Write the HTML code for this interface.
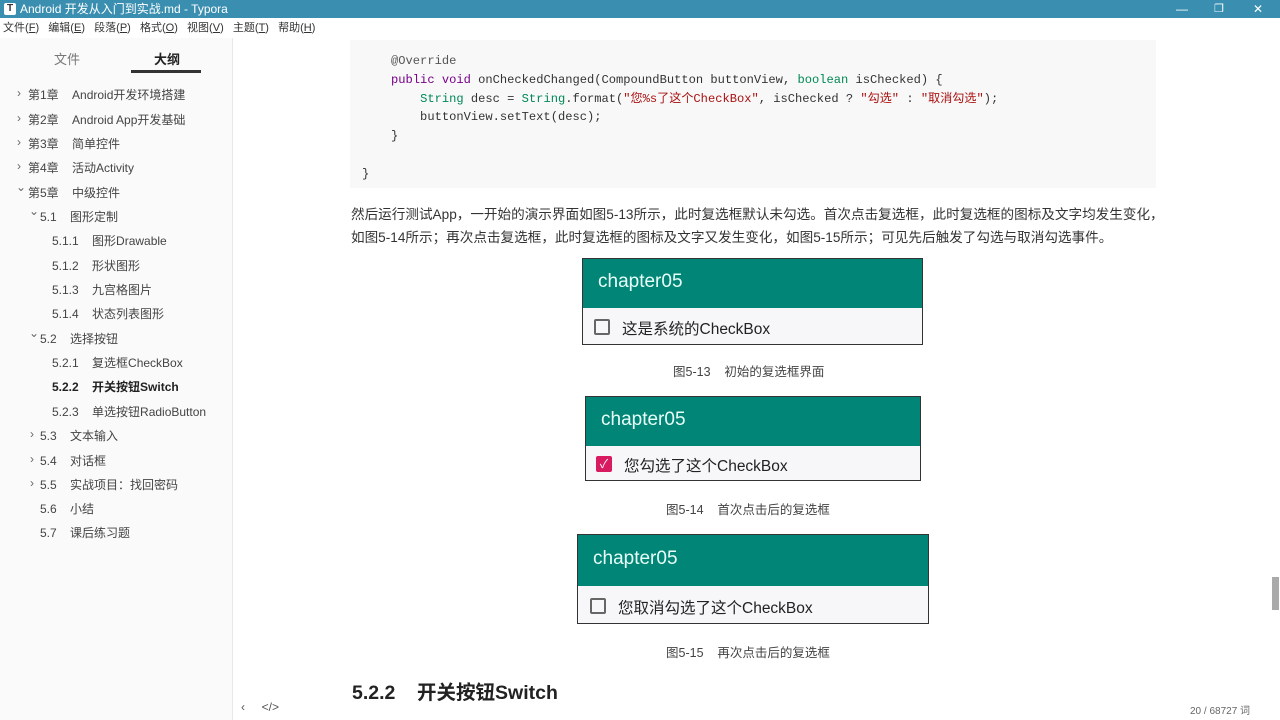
<!DOCTYPE html>
<html><head><meta charset="utf-8"><style>
*{margin:0;padding:0;box-sizing:border-box}
body{width:1280px;height:720px;overflow:hidden;background:#fff;font-family:"Liberation Sans","Noto Sans CJK SC",sans-serif;color:#333;position:relative}
.abs{position:absolute;white-space:nowrap}
#title{left:0;top:0;width:1280px;height:18px;background:#3a8fb0;color:#fff;font-size:12px;line-height:18px}
#menu{left:0;top:18px;width:1280px;height:20px;font-size:11px;line-height:20px;color:#333}
#side{left:0;top:38px;width:233px;height:682px;background:#fafafa;border-right:1px solid #e8e8e8}
.si{font-size:12px;color:#444;position:absolute;white-space:nowrap}
.ar{position:absolute;font-size:12px;color:#666}
pre{font-family:"Liberation Mono","Noto Sans CJK SC",monospace;font-size:12.1px;color:#333;white-space:pre !important}
.code{left:350px;top:40px;width:806px;height:148px;background:#f8f8f8}
.kw{color:#770088}.ty{color:#008855}.st{color:#aa1111}.at{color:#555}
.p{font-size:13.6px;color:#333}
.fig{position:absolute;border:1.5px solid #333;background:#f7f7f9}
.fig .h{background:#008577;color:#e8fff8;font-size:19px;padding-left:15px;font-family:"Liberation Sans",sans-serif}
.fig .b{font-size:15.5px;color:#222;position:relative}
.cb{position:absolute;width:16px;height:16px;border:2px solid #666;border-radius:2px}
.cap{font-size:12.5px;color:#444;position:absolute;white-space:nowrap}
</style></head><body>
<div id="title" class="abs"><span style="display:inline-block;width:12px;height:12px;background:#fff;color:#333;font-size:10px;line-height:12px;text-align:center;margin:3px 4px 0 4px;vertical-align:top;font-weight:bold;border-radius:2px">T</span>Android 开发从入门到实战.md - Typora
<span style="position:absolute;left:1176px;top:0">—</span><span style="position:absolute;left:1214px;top:0;font-size:11px">❐</span><span style="position:absolute;left:1253px;top:0">✕</span></div>
<div id="menu" class="abs">&nbsp;文件(<u>F</u>)&nbsp;&nbsp; 编辑(<u>E</u>)&nbsp;&nbsp; 段落(<u>P</u>)&nbsp;&nbsp; 格式(<u>O</u>)&nbsp;&nbsp; 视图(<u>V</u>)&nbsp;&nbsp; 主题(<u>T</u>)&nbsp;&nbsp; 帮助(<u>H</u>)</div>
<div id="side" class="abs">
<div class="si" style="left:54px;top:11px;font-size:13px;color:#777">文件</div>
<div class="si" style="left:154px;top:11px;font-size:13px;font-weight:bold;color:#222">大纲</div>
<div style="position:absolute;left:131px;top:32px;width:70px;height:3px;background:#333"></div>
</div>
<div class="abs" style="left:0;top:36px;width:233px;height:600px">
<span class="ar" style="left:17px;top:50px">›</span><span class="si" style="left:28px;top:50px">第1章&nbsp;&nbsp;&nbsp; Android开发环境搭建</span>
<span class="ar" style="left:17px;top:75px">›</span><span class="si" style="left:28px;top:75px">第2章&nbsp;&nbsp;&nbsp; Android App开发基础</span>
<span class="ar" style="left:17px;top:99px">›</span><span class="si" style="left:28px;top:99px">第3章&nbsp;&nbsp;&nbsp; 简单控件</span>
<span class="ar" style="left:17px;top:123px">›</span><span class="si" style="left:28px;top:123px">第4章&nbsp;&nbsp;&nbsp; 活动Activity</span>
<span class="ar" style="left:16px;top:144px">⌄</span><span class="si" style="left:28px;top:148px">第5章&nbsp;&nbsp;&nbsp; 中级控件</span>
<span class="ar" style="left:29px;top:168px">⌄</span><span class="si" style="left:40px;top:172px">5.1&nbsp;&nbsp;&nbsp; 图形定制</span>
<span class="si" style="left:52px;top:196px">5.1.1&nbsp;&nbsp;&nbsp; 图形Drawable</span>
<span class="si" style="left:52px;top:221px">5.1.2&nbsp;&nbsp;&nbsp; 形状图形</span>
<span class="si" style="left:52px;top:245px">5.1.3&nbsp;&nbsp;&nbsp; 九宫格图片</span>
<span class="si" style="left:52px;top:269px">5.1.4&nbsp;&nbsp;&nbsp; 状态列表图形</span>
<span class="ar" style="left:29px;top:290px">⌄</span><span class="si" style="left:40px;top:294px">5.2&nbsp;&nbsp;&nbsp; 选择按钮</span>
<span class="si" style="left:52px;top:318px">5.2.1&nbsp;&nbsp;&nbsp; 复选框CheckBox</span>
<span class="si" style="left:52px;top:342px;font-weight:bold;color:#222">5.2.2&nbsp;&nbsp;&nbsp; 开关按钮Switch</span>
<span class="si" style="left:52px;top:367px">5.2.3&nbsp;&nbsp;&nbsp; 单选按钮RadioButton</span>
<span class="ar" style="left:30px;top:391px">›</span><span class="si" style="left:40px;top:391px">5.3&nbsp;&nbsp;&nbsp; 文本输入</span>
<span class="ar" style="left:30px;top:416px">›</span><span class="si" style="left:40px;top:416px">5.4&nbsp;&nbsp;&nbsp; 对话框</span>
<span class="ar" style="left:30px;top:440px">›</span><span class="si" style="left:40px;top:440px">5.5&nbsp;&nbsp;&nbsp; 实战项目：找回密码</span>
<span class="si" style="left:40px;top:464px">5.6&nbsp;&nbsp;&nbsp; 小结</span>
<span class="si" style="left:40px;top:488px">5.7&nbsp;&nbsp;&nbsp; 课后练习题</span>
</div>
<div class="abs code"></div>
<pre class="abs" style="left:362px;top:52px;line-height:18.8px">    <span class="at">@Override</span>
    <span class="kw">public</span> <span class="kw">void</span> onCheckedChanged(CompoundButton buttonView, <span class="ty">boolean</span> isChecked) {
        <span class="ty">String</span> desc = <span class="ty">String</span>.format(<span class="st">"您%s了这个CheckBox"</span>, isChecked ? <span class="st">"勾选"</span> : <span class="st">"取消勾选"</span>);
        buttonView.setText(desc);
    }

}</pre>
<div class="abs p" style="left:351px;top:203px">然后运行测试App，一开始的演示界面如图5-13所示，此时复选框默认未勾选。首次点击复选框，此时复选框的图标及文字均发生变化，</div>
<div class="abs p" style="left:351px;top:226px">如图5-14所示；再次点击复选框，此时复选框的图标及文字又发生变化，如图5-15所示；可见先后触发了勾选与取消勾选事件。</div>

<div class="fig" style="left:582px;top:258px;width:341px;height:87px">
<div class="h" style="height:49px;line-height:46px">chapter05</div>
<div class="b" style="height:36px"><span class="cb" style="left:11px;top:11px"></span><span style="position:absolute;left:39px;top:9px">这是系统的CheckBox</span></div></div>
<div class="cap" style="left:673px;top:361px">图5-13&nbsp;&nbsp;&nbsp; 初始的复选框界面</div>

<div class="fig" style="left:585px;top:396px;width:336px;height:85px">
<div class="h" style="height:49px;line-height:46px">chapter05</div>
<div class="b" style="height:34px"><span class="cb" style="left:10px;top:10px;background:#d81b60;border-color:#d81b60;color:#fff;font-size:12px;line-height:12px;text-align:center">✓</span><span style="position:absolute;left:38px;top:8px">您勾选了这个CheckBox</span></div></div>
<div class="cap" style="left:666px;top:499px">图5-14&nbsp;&nbsp;&nbsp; 首次点击后的复选框</div>

<div class="fig" style="left:577px;top:534px;width:352px;height:90px">
<div class="h" style="height:51px;line-height:48px">chapter05</div>
<div class="b" style="height:37px"><span class="cb" style="left:12px;top:12px"></span><span style="position:absolute;left:40px;top:10px">您取消勾选了这个CheckBox</span></div></div>
<div class="cap" style="left:666px;top:642px">图5-15&nbsp;&nbsp;&nbsp; 再次点击后的复选框</div>

<div class="abs" style="left:352px;top:676px;font-size:19.5px;font-weight:bold;color:#222">5.2.2&nbsp;&nbsp;&nbsp; 开关按钮Switch</div>
<div class="abs" style="left:241px;top:700px;font-size:12px;color:#555">‹&nbsp;&nbsp;&nbsp;&nbsp; &lt;/&gt;</div>
<div class="abs" style="left:1190px;top:702px;font-size:10px;color:#666">20 / 68727 词</div>
<div class="abs" style="left:1272px;top:577px;width:7px;height:33px;background:#aaa"></div>
</body></html>
